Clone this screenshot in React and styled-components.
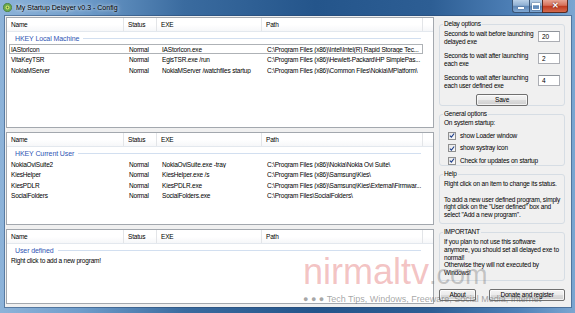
import React from 'react'
import styled, { createGlobalStyle } from 'styled-components'

const GlobalStyle = createGlobalStyle`
  html, body {
    margin: 0;
    padding: 0;
    background: #ffffff;
  }
  body {
    font-family: "Liberation Sans", Arial, sans-serif;
  }
`

const lists = [
  {
    group: 'HKEY Local Machine',
    focused: 0,
    rows: [
      ['IAStorIcon', 'Normal', 'IAStorIcon.exe', 'C:\\Program Files (x86)\\Intel\\Intel(R) Rapid Storage Tec...'],
      ['VitaKeyTSR', 'Normal', 'EgisTSR.exe /run', 'C:\\Program Files (x86)\\Hewlett-Packard\\HP SimplePas...'],
      ['NokiaMServer', 'Normal', 'NokiaMServer /watchfiles startup', 'C:\\Program Files (x86)\\Common Files\\Nokia\\MPlatform\\'],
    ],
    height: 111,
  },
  {
    group: 'HKEY Current User',
    rows: [
      ['NokiaOviSuite2', 'Normal', 'NokiaOviSuite.exe -tray', 'C:\\Program Files (x86)\\Nokia\\Nokia Ovi Suite\\'],
      ['KiesHelper', 'Normal', 'KiesHelper.exe /s', 'C:\\Program Files (x86)\\Samsung\\Kies\\'],
      ['KiesPDLR', 'Normal', 'KiesPDLR.exe', 'C:\\Program Files (x86)\\Samsung\\Kies\\External\\Firmwar...'],
      ['SocialFolders', 'Normal', 'SocialFolders.exe', 'C:\\Program Files\\SocialFolders\\'],
    ],
    height: 93,
  },
  {
    group: 'User defined',
    note: 'Right click to add a new program!',
    rows: [],
    height: 75,
  },
]

const delays = [
  ['Seconds to wait before launching', 'delayed exe', '20'],
  ['Seconds to wait after launching', 'each exe', '2'],
  ['Seconds to wait after launching', 'each user defined exe', '4'],
]

const startupOptions = ['show Loader window', 'show systray icon', 'Check for updates on startup']

const helpLines = [
  'Right click on an item to change its status.',
  '',
  'To add a new user defined program, simply',
  'right click on the "User defined" box and',
  'select "Add a new program".',
]

const importantLines = [
  'If you plan to not use this software',
  'anymore, you should set all delayed exe to',
  'normal!',
  'Otherwise they will not executed by',
  'Windows!',
]

function Check() {
  return (
    <svg width="7" height="7" viewBox="0 0 7 7">
      <path d="M1 3.6 L2.8 5.4 L6 1.2" fill="none" stroke="#1f3f8a" strokeWidth="1.3" />
    </svg>
  )
}

function AppIcon() {
  return (
    <svg width="9" height="9" viewBox="0 0 9 9">
      <circle cx="4.5" cy="4.5" r="4.2" fill="#6aa84f" stroke="#3d6e2b" strokeWidth="0.6" />
      <circle cx="4.5" cy="4.5" r="2" fill="#d8e86a" />
      <circle cx="4.5" cy="4.5" r="0.9" fill="#4a7d34" />
    </svg>
  )
}

function ProgramList({ data }) {
  return (
    <ListBox $h={data.height}>
      <HeaderRow>
        <HeaderCell>Name</HeaderCell>
        <HeaderCell>Status</HeaderCell>
        <HeaderCell>EXE</HeaderCell>
        <HeaderCell>Path</HeaderCell>
        <HeaderCell $last />
      </HeaderRow>
      <GroupTitle>
        <span>{data.group}</span>
      </GroupTitle>
      {data.rows.map((r, i) => (
        <Row key={r[0]} $focused={data.focused === i}>
          {r.map((c, j) => (
            <Cell key={j}>{c}</Cell>
          ))}
        </Row>
      ))}
      {data.note && <Note>{data.note}</Note>}
    </ListBox>
  )
}

function Lines({ lines }) {
  return (
    <Text $top={2}>
      {lines.map((l, i) => (
        <Line key={i}>{l || '\u00a0'}</Line>
      ))}
    </Text>
  )
}

export default function App() {
  return (
    <>
      <GlobalStyle />
      <Window>
        <TitleBar>
          <AppIcon />
          <Title>My Startup Delayer v0.3 - Config</Title>
          <Controls>
            <CtrlButton $w={17}>
              <MinGlyph />
            </CtrlButton>
            <CtrlButton $w={13}>
              <MaxGlyph />
            </CtrlButton>
            <CloseButton>✕</CloseButton>
          </Controls>
        </TitleBar>
        <Frame>
          <Client>
            <LeftColumn>
              {lists.map((l) => (
                <ProgramList key={l.group} data={l} />
              ))}
            </LeftColumn>
            <RightColumn>
              <Group $h={86}>
                <Legend>Delay options</Legend>
                <DelayRows>
                  {delays.map((d, i) => (
                    <DelayRow key={i}>
                      <DelayText>
                        {d[0]}
                        <br />
                        {d[1]}
                      </DelayText>
                      <NumberBox>{d[2]}</NumberBox>
                    </DelayRow>
                  ))}
                </DelayRows>
                <ButtonRow>
                  <Button $w={52}>Save</Button>
                </ButtonRow>
              </Group>
              <Group $h={56}>
                <Legend>General options</Legend>
                <Text $top={1}>On system startup:</Text>
                <Checks>
                  {startupOptions.map((o) => (
                    <CheckRow key={o}>
                      <CheckBox>
                        <Check />
                      </CheckBox>
                      <span>{o}</span>
                    </CheckRow>
                  ))}
                </Checks>
              </Group>
              <Group $h={54}>
                <Legend>Help</Legend>
                <Lines lines={helpLines} />
              </Group>
              <Group $h={53}>
                <Legend>IMPORTANT</Legend>
                <Lines lines={importantLines} />
              </Group>
              <BottomButtons>
                <Button $w={37}>About</Button>
                <Button $w={76}>Donate and register</Button>
              </BottomButtons>
            </RightColumn>
          </Client>
        </Frame>
        <Watermark>
          <Brand>
            nirmaltv<Dim>.com</Dim>
          </Brand>
          <Tagline>● ● ● Tech Tips, Windows, Freeware, Social Media, Internet</Tagline>
        </Watermark>
      </Window>
    </>
  )
}

const Window = styled.div`
  position: relative;
  width: 575px;
  height: 313px;
  overflow: hidden;
  display: flex;
  flex-direction: column;
  background: linear-gradient(
    90deg,
    #8db3d9 0%,
    #6f9dcb 14%,
    #3a6b9f 32%,
    #24558b 55%,
    #2d5e94 75%,
    #4f81b8 90%,
    #7ba6d1 100%
  );
  font-size: 6.5px;
  letter-spacing: -0.2px;
  color: #000;
`

const TitleBar = styled.div`
  height: 17px;
  display: flex;
  align-items: flex-start;
  padding: 3px 7px 0 3px;
  box-sizing: border-box;
  gap: 4px;
`

const Title = styled.span`
  font-size: 7px;
  letter-spacing: 0;
  line-height: 10px;
  color: #000;
  text-shadow: 0 0 3px rgba(255, 255, 255, 0.9), 0 0 6px rgba(255, 255, 255, 0.6);
`

const Controls = styled.div`
  margin-left: auto;
  margin-top: -3px;
  display: flex;
`

const CtrlButton = styled.div`
  width: ${(p) => p.$w}px;
  height: 13px;
  box-sizing: border-box;
  display: flex;
  align-items: center;
  justify-content: center;
  border: 1px solid #3b5575;
  border-top: none;
  border-right: none;
  background: linear-gradient(180deg, #b9d0e8 0%, #8fb0d3 45%, #5f87b6 50%, #7fa7d2 100%);
  &:first-child {
    border-bottom-left-radius: 3px;
  }
`

const MinGlyph = styled.span`
  width: 6px;
  height: 2px;
  margin-top: 3px;
  background: #fff;
  box-shadow: 0 0 1px #223;
`

const MaxGlyph = styled.span`
  width: 6px;
  height: 4px;
  border: 1px solid #fff;
  border-top-width: 2px;
  box-shadow: 0 0 1px #223;
`

const CloseButton = styled.div`
  width: 26px;
  height: 13px;
  box-sizing: border-box;
  border: 1px solid #5a2a20;
  border-top: none;
  border-bottom-right-radius: 3px;
  background: linear-gradient(180deg, #e8a595 0%, #d7715a 45%, #c0391f 50%, #d46a4d 100%);
  color: #fff;
  font-size: 8px;
  font-weight: bold;
  text-align: center;
  line-height: 12px;
  letter-spacing: 0;
  text-shadow: 0 0 2px #400;
`

const Frame = styled.div`
  flex: 1;
  display: flex;
  padding: 0 5px 6px 5px;
`

const Client = styled.div`
  flex: 1;
  display: flex;
  gap: 4px;
  background: #f0f0f0;
  padding: 1px 6px 3px 1px;
  box-shadow: 0 0 0 1px rgba(40, 70, 110, 0.5);
`

const LeftColumn = styled.div`
  width: 428px;
  display: flex;
  flex-direction: column;
  gap: 4px;
`

const ListBox = styled.div`
  height: ${(p) => p.$h}px;
  box-sizing: border-box;
  background: #fff;
  border: 1px solid #a3a8ae;
  overflow: hidden;
`

const HeaderRow = styled.div`
  display: grid;
  grid-template-columns: 117px 33px 105px 161px 1fr;
  height: 13px;
  border-bottom: 1px solid #e3e8ee;
  background: linear-gradient(180deg, #ffffff 0%, #ffffff 50%, #f6f7f9 100%);
`

const HeaderCell = styled.div`
  padding-left: 4px;
  line-height: 13px;
  border-right: ${(p) => (p.$last ? 'none' : '1px solid #e3e5e8')};
`

const GroupTitle = styled.div`
  height: 12px;
  display: flex;
  align-items: center;
  padding: 0 12px 0 8px;
  gap: 4px;
  color: #2f55b4;
  font-size: 7px;
  letter-spacing: -0.1px;
  &::after {
    content: '';
    flex: 1;
    height: 1px;
    background: #d2dff0;
  }
`

const Row = styled.div`
  display: grid;
  grid-template-columns: 115px 33px 105px 161px;
  height: 10.3px;
  line-height: 9px;
  margin: 0 10px 0 2px;
  box-sizing: border-box;
  border: 1px solid ${(p) => (p.$focused ? '#aeb2b6' : 'transparent')};
`

const Cell = styled.div`
  padding-left: 4px;
  white-space: nowrap;
  overflow: hidden;
  &:first-child {
    padding-left: 1px;
  }
`

const Note = styled.div`
  padding-left: 4px;
  line-height: 10px;
`

const RightColumn = styled.div`
  flex: 1;
  display: flex;
  flex-direction: column;
  gap: 4px;
  padding: 3px 0 0 1px;
`

const Group = styled.fieldset`
  margin: 0;
  height: ${(p) => p.$h}px;
  box-sizing: border-box;
  border: 1px solid #d6dde4;
  border-radius: 3px;
  padding: 0 4px 0 4px;
  min-width: 0;
`

const Legend = styled.legend`
  padding: 0 1px;
  margin-left: -1px;
  line-height: 8px;
`

const Text = styled.div`
  line-height: 7.8px;
  padding-top: ${(p) => p.$top}px;
`

const Line = styled.div`
  white-space: nowrap;
`

const DelayRows = styled.div`
  display: flex;
  flex-direction: column;
  gap: 6px;
  padding-top: 2px;
`

const DelayRow = styled.div`
  display: flex;
  align-items: flex-start;
  justify-content: space-between;
`

const DelayText = styled.div`
  line-height: 8px;
`

const NumberBox = styled.div`
  width: 22px;
  height: 11px;
  box-sizing: border-box;
  margin-top: 1px;
  border: 1px solid #abadb3;
  border-top-color: #8e939a;
  background: #fff;
  padding-left: 3px;
  line-height: 9px;
`

const ButtonRow = styled.div`
  display: flex;
  justify-content: center;
  padding-top: 4px;
`

const Button = styled.div`
  width: ${(p) => p.$w}px;
  height: 12px;
  box-sizing: border-box;
  border: 1px solid #707070;
  border-radius: 2px;
  background: linear-gradient(180deg, #f4f4f4 0%, #ebebeb 48%, #dcdcdc 52%, #cfcfcf 100%);
  box-shadow: inset 0 0 0 1px rgba(255, 255, 255, 0.7);
  text-align: center;
  line-height: 10px;
`

const Checks = styled.div`
  display: flex;
  flex-direction: column;
  gap: 4.5px;
  padding: 5px 0 0 4px;
`

const CheckRow = styled.div`
  display: flex;
  align-items: center;
  gap: 4px;
  line-height: 8px;
`

const CheckBox = styled.span`
  width: 8px;
  height: 8px;
  box-sizing: border-box;
  border: 1px solid #8f8f8f;
  background: linear-gradient(135deg, #e6e6e6 0%, #fbfbfb 100%);
  display: flex;
  align-items: center;
  justify-content: center;
`

const BottomButtons = styled.div`
  margin-top: auto;
  margin-bottom: 3px;
  display: flex;
  justify-content: space-between;
`

const Watermark = styled.div`
  position: absolute;
  left: 303px;
  top: 255px;
  pointer-events: none;
  letter-spacing: 0;
`

const Brand = styled.div`
  font-family: "Liberation Sans", sans-serif;
  font-size: 36px;
  line-height: 34px;
  color: rgba(226, 110, 110, 0.42);
`

const Dim = styled.span`
  font-size: 27px;
  color: rgba(120, 120, 120, 0.38);
`

const Tagline = styled.div`
  margin-top: 2px;
  font-size: 9px;
  white-space: nowrap;
  color: rgba(90, 90, 90, 0.55);
`
